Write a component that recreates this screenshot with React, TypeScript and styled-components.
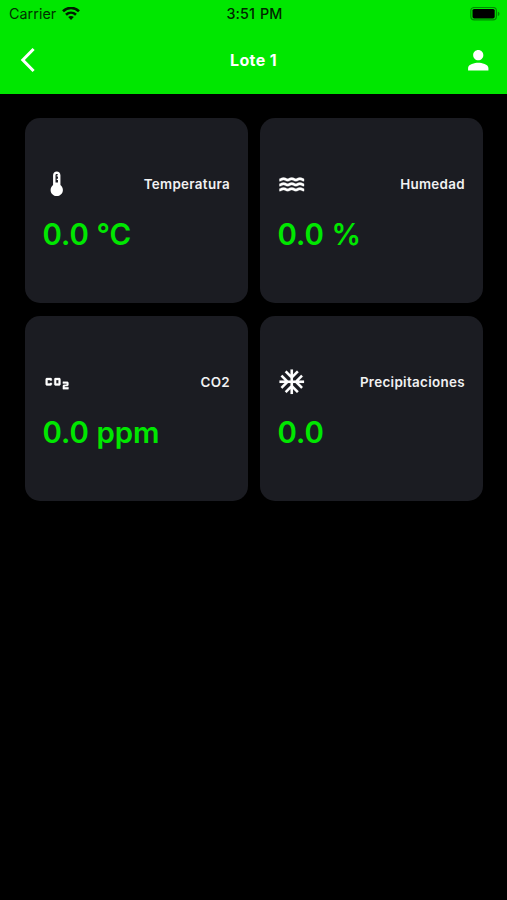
import React from "react";
import styled, { createGlobalStyle } from "styled-components";
import type { IconType } from "react-icons";
import { MdAcUnit, MdCo2, MdDeviceThermostat, MdPerson, MdWater } from "react-icons/md";

const green = "#00e700";

const GlobalStyle = createGlobalStyle`
  * { box-sizing: border-box; }
  body {
    margin: 0;
    background: #000;
    font-family: Inter, "Liberation Sans", sans-serif;
  }
`;

const Screen = styled.div`
  width: 507px;
  min-height: 900px;
  background: #000;
`;

const Header = styled.header`
  height: 93.5px;
  background: ${green};
`;

const StatusBar = styled.div`
  display: grid;
  grid-template-columns: 1fr auto 1fr;
  align-items: center;
  height: 27px;
  padding: 0 7px 0 9px;
  color: #003000;
  font-size: 14.3px;
`;

const Network = styled.div`
  display: flex;
  align-items: center;
  gap: 6px;
  letter-spacing: 0.05px;
`;

const Clock = styled.div`
  color: #002600;
  font-weight: 550;
  font-size: 14.3px;
  letter-spacing: 0.1px;
  word-spacing: 1.2px;
`;

const BatterySlot = styled.div`
  display: flex;
  justify-content: flex-end;
`;

const NavBar = styled.div`
  display: grid;
  grid-template-columns: 1fr auto 1fr;
  align-items: center;
  height: 66px;
  padding: 0 14px 0 20px;
  color: #fff;
`;

const NavTitle = styled.h1`
  margin: 0 0 0 -6px;
  font-size: 16px;
  font-weight: 650;
  letter-spacing: 0.35px;
`;

const NavButton = styled.button<{ $end?: boolean }>`
  display: flex;
  justify-self: ${(p) => (p.$end ? "end" : "start")};
  padding: 0;
  border: 0;
  background: none;
  color: inherit;
`;

const Grid = styled.main`
  display: grid;
  grid-template-columns: repeat(2, 222.5px);
  grid-auto-rows: 185px;
  gap: 12.5px;
  padding: 24.8px 25px;
`;

const Card = styled.section`
  display: flex;
  flex-direction: column;
  justify-content: center;
  gap: 16px;
  padding: 2.5px 17.5px 0;
  border-radius: 15px;
  background: #1b1c22;
`;

const CardTop = styled.div`
  display: flex;
  align-items: center;
  justify-content: space-between;
  height: 30px;
  color: #fff;
`;

const IconBox = styled.span<{ $outline: number }>`
  display: flex;
  margin-left: -0.8px;

  svg {
    stroke: none;
  }

  path:not([fill="none"]) {
    stroke: currentColor;
    stroke-width: ${(p) => p.$outline};
  }
`;

const Label = styled.span`
  color: #f1f1f2;
  font-size: 13.4px;
  font-weight: 600;
  letter-spacing: 0.33px;
`;

const Value = styled.div`
  height: 40px;
  color: ${green};
  font-size: 29.4px;
  font-weight: 600;
  line-height: 40px;
  white-space: nowrap;
`;

type Metric = { label: string; value: string; icon: IconType; outline: number };

const metrics: Metric[] = [
  { label: "Temperatura", value: "0.0 °C", icon: MdDeviceThermostat, outline: 0 },
  { label: "Humedad", value: "0.0 %", icon: MdWater, outline: 0.25 },
  { label: "CO2", value: "0.0 ppm", icon: MdCo2, outline: 0.3 },
  { label: "Precipitaciones", value: "0.0", icon: MdAcUnit, outline: 0.1 },
];

const WifiIcon = () => (
  <svg width="18" height="14" viewBox="0 0 18 14" fill="none" stroke="#001c00" strokeWidth="2.6">
    <path d="M1 4.3C5.6-.2 12.4-.2 17 4.3" />
    <path d="M4 7.7c2.9-2.7 7.1-2.7 10 0" />
    <path d="M9 12.9 6.2 10.1c1.6-1.4 4-1.4 5.6 0z" fill="#001c00" stroke="none" />
  </svg>
);

const BatteryIcon = () => (
  <svg width="30" height="14" viewBox="0 0 30 14">
    <rect x="0.8" y="0.5" width="25.6" height="12.4" rx="3.4" fill="none" stroke="#008c00" strokeWidth="1.2" />
    <rect x="2.5" y="1.9" width="22.2" height="9.6" rx="1.7" fill="#000" />
    <path d="M27.8 4.4c2.2.8 2.2 3.8 0 4.6z" fill="#008c00" />
  </svg>
);

const BackIcon = () => (
  <svg width="16" height="26" viewBox="0 0 16 26" fill="none" stroke="currentColor" strokeWidth="3">
    <path d="M13.6 2 2.8 13l10.8 11" />
  </svg>
);

const MetricCard = ({ label, value, icon: Icon, outline }: Metric) => (
  <Card>
    <CardTop>
      <IconBox $outline={outline}>
        <Icon size={29.5} />
      </IconBox>
      <Label>{label}</Label>
    </CardTop>
    <Value>{value}</Value>
  </Card>
);

export default function App() {
  return (
    <Screen>
      <GlobalStyle />
      <Header>
        <StatusBar>
          <Network>
            Carrier
            <WifiIcon />
          </Network>
          <Clock>3:51 PM</Clock>
          <BatterySlot>
            <BatteryIcon />
          </BatterySlot>
        </StatusBar>
        <NavBar>
          <NavButton aria-label="Volver">
            <BackIcon />
          </NavButton>
          <NavTitle>Lote 1</NavTitle>
          <NavButton $end aria-label="Perfil">
            <MdPerson size={30.5} />
          </NavButton>
        </NavBar>
      </Header>
      <Grid>
        {metrics.map((metric) => (
          <MetricCard key={metric.label} {...metric} />
        ))}
      </Grid>
    </Screen>
  );
}
